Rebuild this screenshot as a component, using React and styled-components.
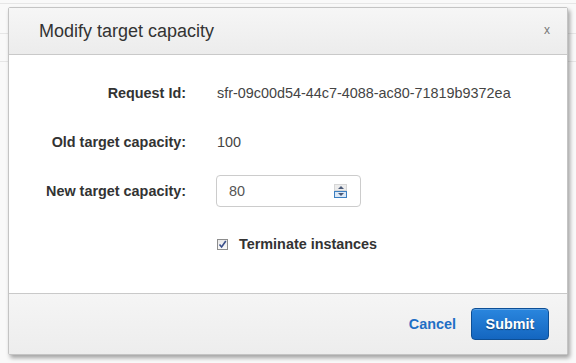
import { createGlobalStyle, styled } from "styled-components";

const Global = createGlobalStyle`
  html, body { margin: 0; padding: 0; }
  body {
    width: 576px;
    height: 363px;
    overflow: hidden;
    background: #f9f9f9;
    font-family: Arial, "Liberation Sans", sans-serif;
  }
`;

const Page = styled.div`
  position: relative;
  width: 576px;
  height: 363px;
  padding: 7px 8px 0 8px;
  box-sizing: border-box;
`;

// faint rules of the page that sits behind the modal
const BackRule = styled.div`
  position: absolute;
  left: 0;
  right: 0;
  top: ${(p) => p.$top}px;
  height: 1px;
  background: #e6e6e6;
`;

const Modal = styled.div`
  position: relative;
  width: 560px;
  height: 348px;
  display: flex;
  flex-direction: column;
  background: #fff;
  border: 1px solid #c4c4c4;
  border-radius: 2px;
  box-shadow: 2px 3px 4px rgba(0, 0, 0, 0.35);
  box-sizing: border-box;
`;

const Header = styled.div`
  height: 47px;
  display: flex;
  align-items: center;
  justify-content: space-between;
  padding: 0 17px 0 30px;
  background: linear-gradient(#f6f6f6, #ececec);
  border-bottom: 1px solid #c9c9c9;
  box-sizing: border-box;
`;

const Title = styled.h1`
  margin: 0;
  font-size: 18px;
  font-weight: normal;
  color: #333;
`;

const Close = styled.span`
  font-size: 12px;
  color: #777;
  margin-top: -2px;
`;

const Body = styled.div`
  flex: 1;
  display: flex;
  flex-direction: column;
  padding-top: 14px;
`;

const Row = styled.div`
  display: flex;
  align-items: center;
  height: ${(p) => p.$h || 48}px;
`;

const Label = styled.div`
  width: 177px;
  text-align: right;
  font-size: 14.4px;
  font-weight: bold;
  color: #333;
  padding-right: 31px;
`;

const Value = styled.div`
  font-size: 14.4px;
  color: #444;
`;

const InputBox = styled.div`
  width: 145px;
  height: 32px;
  display: flex;
  align-items: center;
  justify-content: space-between;
  padding: 0 13px 0 12px;
  border: 1px solid #ccc;
  border-radius: 4px;
  box-sizing: border-box;
  font-size: 14.4px;
  color: #555;
  margin-left: -1px;
`;

const Spinner = styled.div`
  display: flex;
  flex-direction: column;
  width: 13px;
`;

const SpinHalf = styled.div`
  height: 7px;
  display: flex;
  align-items: center;
  justify-content: center;
  background: ${(p) => (p.$active ? "#dce9f7" : "#ececec")};
  border: 1px solid ${(p) => (p.$active ? "#3c7fc1" : "#d6d6d6")};
  box-sizing: border-box;
  &::after {
    content: "";
    border-left: 3px solid transparent;
    border-right: 3px solid transparent;
    ${(p) => (p.$up ? "border-bottom" : "border-top")}: 3px solid #4a5a78;
  }
`;

const CheckRow = styled.label`
  display: flex;
  align-items: center;
  gap: 11px;
  margin-left: 208px;
  margin-top: 20px;
  font-size: 14.4px;
  font-weight: bold;
  color: #333;
`;

const Check = styled.span`
  width: 11px;
  height: 11px;
  border: 1px solid #8d8d8d;
  background: linear-gradient(#e8e8e8, #fafafa);
  display: flex;
  align-items: center;
  justify-content: center;
  box-sizing: border-box;
`;

const Footer = styled.div`
  height: 61px;
  display: flex;
  align-items: center;
  justify-content: flex-end;
  gap: 15px;
  padding-right: 18px;
  background: linear-gradient(#f5f5f5, #ededed);
  border-top: 1px solid #c9c9c9;
  box-sizing: border-box;
`;

const LinkButton = styled.button`
  border: none;
  background: none;
  font: bold 14.4px Arial, "Liberation Sans", sans-serif;
  color: #1f6fc5;
  padding: 0;
`;

const Primary = styled.button`
  width: 78px;
  height: 32px;
  border: 1px solid #0d4f96;
  border-radius: 4px;
  background: linear-gradient(#2a86de, #1466c0);
  color: #fff;
  font: bold 14.4px Arial, "Liberation Sans", sans-serif;
  text-shadow: 0 1px 1px rgba(0, 0, 0, 0.45);
  box-shadow: inset 0 1px 0 rgba(255, 255, 255, 0.25);
`;

export default function App() {
  return (
    <Page>
      <Global />
      <BackRule $top={3} />
      <BackRule $top={33} />
      <BackRule $top={61} />
      <Modal>
        <Header>
          <Title>Modify target capacity</Title>
          <Close>x</Close>
        </Header>
        <Body>
          <Row>
            <Label>Request Id:</Label>
            <Value>sfr-09c00d54-44c7-4088-ac80-71819b9372ea</Value>
          </Row>
          <Row $h={49}>
            <Label>Old target capacity:</Label>
            <Value>100</Value>
          </Row>
          <Row $h={50}>
            <Label>New target capacity:</Label>
            <InputBox>
              <span>80</span>
              <Spinner>
                <SpinHalf $up />
                <SpinHalf $active />
              </Spinner>
            </InputBox>
          </Row>
          <CheckRow>
            <Check>
              <svg width="9" height="9" viewBox="0 0 9 9">
                <path d="M1.5 4.5 L3.6 7 L7.8 1" fill="none" stroke="#3a4f8a" strokeWidth="1.6" />
              </svg>
            </Check>
            Terminate instances
          </CheckRow>
        </Body>
        <Footer>
          <LinkButton>Cancel</LinkButton>
          <Primary>Submit</Primary>
        </Footer>
      </Modal>
    </Page>
  );
}
